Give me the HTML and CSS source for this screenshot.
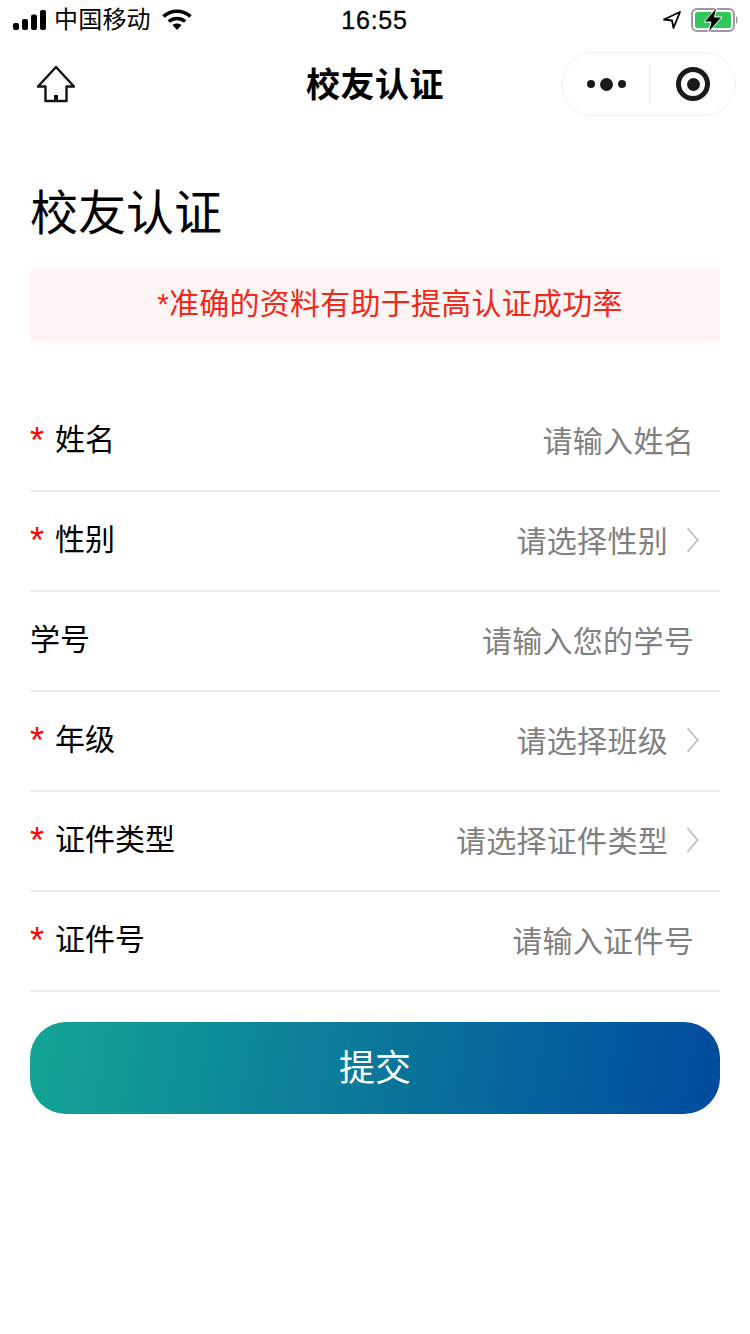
FILE: index.html
```html
<!DOCTYPE html>
<html lang="zh-CN">
<head>
  <meta charset="UTF-8">
  <title>校友认证</title>
  <link rel="stylesheet" href="styles.css">
</head>
<body>
  <div class="page">
    <div class="status-bar">
      <div class="status-left">
        <svg class="signal" width="34" height="20" viewBox="0 0 34 20">
          <rect x="0" y="13" width="6" height="7" rx="2" fill="#000"/>
          <rect x="9" y="9" width="6" height="11" rx="2" fill="#000"/>
          <rect x="18" y="4.500" width="6" height="15.500" rx="2" fill="#000"/>
          <rect x="27" y="0" width="6" height="20" rx="2" fill="#000"/>
        </svg>
        <span class="carrier">中国移动</span>
        <svg class="wifi" width="30" height="22" viewBox="0 0 30 22">
          <path d="M1.500 7.500 C9 0.500 21 0.500 28.500 7.500" fill="none" stroke="#000" stroke-width="3.600"/>
          <path d="M6.800 12.500 C11.500 8.500 18.500 8.500 23.200 12.500" fill="none" stroke="#000" stroke-width="3.600"/>
          <path d="M10.500 16 C13 14 17 14 19.500 16 L15 21 Z" fill="#000"/>
        </svg>
      </div>
      <span class="clock">16:55</span>
      <div class="status-right">
        <svg class="location" width="20" height="20" viewBox="0 0 20 20">
          <path d="M18 2 L2 9.500 L10 10.500 L11.500 18 Z" fill="none" stroke="#000" stroke-width="1.800" stroke-linejoin="round"/>
        </svg>
        <svg class="battery" width="48" height="26" viewBox="0 0 48 26">
          <rect x="1" y="2" width="42" height="22" rx="5" fill="#fff" stroke="#9a9a9a" stroke-width="2"/>
          <rect x="4" y="5" width="36" height="16" rx="2.500" fill="#30c85a"/>
          <path d="M45 9 C47 9.500 47 16.500 45 17 Z" fill="#9a9a9a"/>
          <path d="M26 0 L13 15 L20 15 L17 26 L31 10 L23.500 10 Z" fill="#000" stroke="#fff" stroke-width="1"/>
        </svg>
      </div>
    </div>

    <div class="nav-bar">
      <svg class="home-icon" width="42" height="40" viewBox="0 0 42 40">
        <path d="M21 2 L3 21.500 L10.500 21.500 L10.500 36 L31.500 36 L31.500 21.500 L39 21.500 Z" fill="none" stroke="#111" stroke-width="2.400" stroke-linejoin="round"/>
        <rect x="19" y="30" width="4" height="6" fill="#111"/>
      </svg>
      <h2 class="nav-title">校友认证</h2>
      <div class="capsule">
        <div class="capsule-dots">
          <span class="dot"></span>
          <span class="dot dot-big"></span>
          <span class="dot"></span>
        </div>
        <span class="capsule-line"></span>
        <div class="capsule-target"><span class="target-core"></span></div>
      </div>
    </div>

    <main class="content">
      <h1 class="title">校友认证</h1>
      <div class="notice">*准确的资料有助于提高认证成功率</div>

      <form class="form">
        <div class="row">
          <div class="label"><span class="star">*</span>姓名</div>
          <div class="value value-input">请输入姓名</div>
        </div>
        <div class="row">
          <div class="label"><span class="star">*</span>性别</div>
          <div class="value">请选择性别<span class="arrow"></span></div>
        </div>
        <div class="row">
          <div class="label">学号</div>
          <div class="value value-input">请输入您的学号</div>
        </div>
        <div class="row">
          <div class="label"><span class="star">*</span>年级</div>
          <div class="value">请选择班级<span class="arrow"></span></div>
        </div>
        <div class="row">
          <div class="label"><span class="star">*</span>证件类型</div>
          <div class="value">请选择证件类型<span class="arrow"></span></div>
        </div>
        <div class="row">
          <div class="label"><span class="star">*</span>证件号</div>
          <div class="value value-input">请输入证件号</div>
        </div>
        <button type="button" class="submit">提交</button>
      </form>
    </main>
  </div>
</body>
</html>
```

FILE: styles.css
```css
* {
  box-sizing: border-box;
}

body {
  margin: 0;
  background: #fff;
  color: #000;
  font-family: "Liberation Sans", "Noto Sans CJK SC", sans-serif;
}

.page {
  width: 750px;
  height: 1334px;
  overflow: hidden;
}

.status-bar {
  height: 40px;
  padding: 0 11px 0 13px;
  display: grid;
  grid-template-columns: 1fr auto 1fr;
  align-items: center;
}

.status-left {
  display: flex;
  align-items: center;
}

.carrier {
  margin-left: 7px;
  font-size: 24px;
  letter-spacing: 0.2px;
  line-height: 40px;
}

.wifi {
  margin-left: 11px;
}

.clock {
  padding: 1px 3px 0 0;
  font-size: 25px;
  letter-spacing: 0.8px;
  -webkit-text-stroke: 0.3px #000;
}

.status-right {
  display: flex;
  align-items: center;
  justify-content: flex-end;
}

.battery {
  margin-left: 9px;
}

.nav-bar {
  height: 88px;
  position: relative;
  display: flex;
  align-items: center;
  justify-content: center;
  padding-bottom: 4px;
}

.home-icon {
  position: absolute;
  left: 35px;
  top: 25px;
}

.nav-title {
  margin: 0;
  font-size: 34px;
  font-weight: 700;
  letter-spacing: 0.5px;
}

.capsule {
  position: absolute;
  right: 14px;
  top: 12px;
  width: 175px;
  height: 64px;
  border: 1px solid #f0f0f0;
  border-radius: 32px;
  display: flex;
  align-items: center;
}

.capsule-dots {
  width: 87px;
  padding-left: 2px;
  display: flex;
  align-items: center;
  justify-content: center;
  gap: 5px;
}

.dot {
  width: 8px;
  height: 8px;
  border-radius: 50%;
  background: #1a1a1a;
}

.dot-big {
  width: 13px;
  height: 13px;
}

.capsule-line {
  width: 1px;
  height: 40px;
  background: #e8e8e8;
}

.capsule-target {
  width: 34px;
  height: 34px;
  margin-left: 26px;
  border: 5px solid #1a1a1a;
  border-radius: 50%;
  display: flex;
  align-items: center;
  justify-content: center;
}

.target-core {
  width: 13px;
  height: 13px;
  border-radius: 50%;
  background: #1a1a1a;
}

.content {
  padding: 0 30px;
}

.title {
  margin: 52px 0 0;
  font-size: 48px;
  font-weight: 400;
  line-height: 68px;
}

.notice {
  margin-top: 20px;
  height: 74px;
  padding-left: 30px;
  background: #fff5f5;
  color: #f0291b;
  font-size: 30px;
  letter-spacing: 0.25px;
  line-height: 72px;
  text-align: center;
}

.form {
  margin-top: 50px;
}

.row {
  height: 100px;
  border-bottom: 2px solid #ececec;
  display: flex;
  align-items: center;
  justify-content: space-between;
  padding-bottom: 8px;
}

.label {
  font-size: 30px;
  display: flex;
  align-items: center;
}

.star {
  width: 25px;
  padding-top: 8px;
  color: #f00;
  font-size: 36px;
  line-height: 30px;
  font-family: "Liberation Sans", sans-serif;
}

.value {
  display: flex;
  align-items: center;
  color: #808080;
  font-size: 30px;
  letter-spacing: 0.3px;
  padding-top: 4px;
}

.value-input {
  padding-right: 26px;
}

.arrow {
  width: 18px;
  height: 18px;
  margin: 2px 23px 0 11px;
  border-top: 2px solid #c4c4c4;
  border-right: 2px solid #c4c4c4;
  transform: scaleX(0.85) rotate(45deg);
}

.submit {
  display: block;
  width: 100%;
  height: 92px;
  margin-top: 30px;
  padding: 0 0 6px;
  border: none;
  border-radius: 36px;
  background: linear-gradient(100deg, #14a596, #004a9f);
  color: #fff;
  font-family: inherit;
  font-size: 36px;
}
```
